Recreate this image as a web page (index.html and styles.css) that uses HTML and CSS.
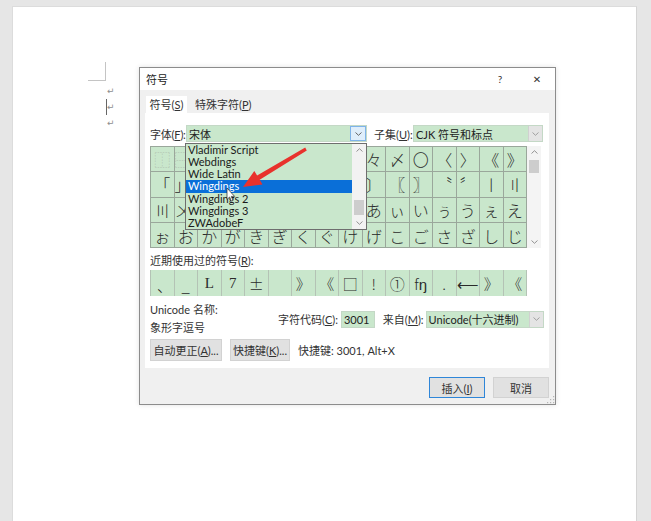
FILE: index.html
```html
<!DOCTYPE html>
<html lang="zh-CN">
<head>
<meta charset="utf-8">
<title>符号</title>
<link rel="stylesheet" href="styles.css">
</head>
<body>
<div class="page">
  <div class="corner"></div>
  <div class="paras"><span>↵</span><span class="caretline">↵</span><span>↵</span></div>

  <div class="dialog">
    <div class="titlebar">
      <span class="title">符号</span>
      <span class="help">?</span>
      <span class="close">✕</span>
    </div>
    <div class="body">
      <div class="tabs">
        <div class="tab active">符号(<u>S</u>)</div>
        <div class="tab">特殊字符(<u>P</u>)</div>
      </div>
      <div class="panel">
        <div class="fontrow">
          <span class="lbl lbl-font">字体(<u>F</u>):</span>
          <div class="combo combo-font"><span class="val">宋体</span><span class="ddbtn open"><svg width="7" height="4" viewBox="0 0 7 4"><path d="M0.5 0.5 L3.5 3.3 L6.5 0.5" fill="none" stroke="#555" stroke-width="0.9"/></svg></span></div>
          <span class="lbl lbl-sub">子集(<u>U</u>):</span>
          <div class="combo combo-sub"><span class="val">CJK 符号和标点</span><span class="ddbtn"><svg width="7" height="4" viewBox="0 0 7 4"><path d="M0.5 0.5 L3.5 3.3 L6.5 0.5" fill="none" stroke="#999" stroke-width="0.9"/></svg></span></div>
        </div>

        <div class="gridwrap">
          <div class="grid">
            <div class="c faint">⿰</div><div class="c faint edge">⿱</div><div class="c"></div><div class="c"></div><div class="c"></div><div class="c"></div><div class="c"></div><div class="c"></div><div class="c"></div><div class="c">々</div><div class="c">〆</div><div class="c">〇</div><div class="c">〈</div><div class="c">〉</div><div class="c">《</div><div class="c">》</div>
            <div class="c">「</div><div class="c edge">」</div><div class="c"></div><div class="c"></div><div class="c"></div><div class="c"></div><div class="c"></div><div class="c"></div><div class="c"></div><div class="c">〕</div><div class="c">〖</div><div class="c">〗</div><div class="c">〝</div><div class="c">〞</div><div class="c">〡</div><div class="c">〢</div>
            <div class="c">〣</div><div class="c edge">〤</div><div class="c"></div><div class="c"></div><div class="c"></div><div class="c"></div><div class="c"></div><div class="c"></div><div class="c"></div><div class="c">あ</div><div class="c">ぃ</div><div class="c">い</div><div class="c">ぅ</div><div class="c">う</div><div class="c">ぇ</div><div class="c">え</div>
            <div class="c low">ぉ</div><div class="c low">お</div><div class="c low">か</div><div class="c low">が</div><div class="c low">き</div><div class="c low">ぎ</div><div class="c low">く</div><div class="c low">ぐ</div><div class="c low">け</div><div class="c low">げ</div><div class="c low">こ</div><div class="c low">ご</div><div class="c low">さ</div><div class="c low">ざ</div><div class="c low">し</div><div class="c low">じ</div>
          </div>
          <div class="vscroll">
            <span class="arr"><svg width="7" height="4" viewBox="0 0 7 4"><path d="M0.5 3.5 L3.5 0.7 L6.5 3.5" fill="none" stroke="#888" stroke-width="0.9"/></svg></span>
            <span class="thumb"></span>
            <span class="spacer"></span>
            <span class="arr"><svg width="7" height="4" viewBox="0 0 7 4"><path d="M0.5 0.5 L3.5 3.3 L6.5 0.5" fill="none" stroke="#888" stroke-width="0.9"/></svg></span>
          </div>
        </div>

        <div class="label-recent">近期使用过的符号(<u>R</u>):</div>
        <div class="recent">
          <div class="c r-dun">、</div><div class="c r-us">_</div><div class="c r-serif">L</div><div class="c r-serif">7</div><div class="c">±</div><div class="c"></div><div class="c">》</div><div class="c">《</div><div class="c">□</div><div class="c">!</div><div class="c">①</div><div class="c">fŋ</div><div class="c">.</div><div class="c">⟵</div><div class="c">》</div><div class="c">《</div>
        </div>

        <div class="info">
          <div class="info-left">
            <span>Unicode 名称:</span>
            <span>象形字逗号</span>
          </div>
          <span class="lbl">字符代码(<u>C</u>):</span>
          <div class="code">3001</div>
          <span class="lbl lbl-from">来自(<u>M</u>):</span>
          <div class="combo combo-from"><span class="val">Unicode(十六进制)</span><span class="ddbtn"><svg width="7" height="4" viewBox="0 0 7 4"><path d="M0.5 0.5 L3.5 3.3 L6.5 0.5" fill="none" stroke="#999" stroke-width="0.9"/></svg></span></div>
        </div>

        <div class="btnrow">
          <button class="btn btn-auto">自动更正(<u>A</u>)...</button>
          <button class="btn btn-key">快捷键(<u>K</u>)...</button>
          <span class="keytext">快捷键: 3001, Alt+X</span>
        </div>
      </div>

      <div class="footer">
        <button class="btn fbtn default">插入(<u>I</u>)</button>
        <button class="btn fbtn">取消</button>
      </div>
    </div>

    <svg class="grip" width="10" height="10" viewBox="0 0 10 10">
      <rect x="8" y="2" width="1.2" height="1.2" fill="#b5b5b5"/>
      <rect x="5" y="5" width="1.2" height="1.2" fill="#b5b5b5"/><rect x="8" y="5" width="1.2" height="1.2" fill="#b5b5b5"/>
      <rect x="2" y="8" width="1.2" height="1.2" fill="#b5b5b5"/><rect x="5" y="8" width="1.2" height="1.2" fill="#b5b5b5"/><rect x="8" y="8" width="1.2" height="1.2" fill="#b5b5b5"/>
    </svg>

    <div class="dropdown">
      <div class="items">
        <div class="item">Vladimir Script</div>
        <div class="item">Webdings</div>
        <div class="item">Wide Latin</div>
        <div class="item sel">Wingdings</div>
        <div class="item">Wingdings 2</div>
        <div class="item">Wingdings 3</div>
        <div class="item">ZWAdobeF</div>
      </div>
      <div class="dscroll">
        <span class="arr"><svg width="7" height="4" viewBox="0 0 7 4"><path d="M0.5 3.5 L3.5 0.7 L6.5 3.5" fill="none" stroke="#888" stroke-width="0.9"/></svg></span>
        <span class="spacer"></span>
        <span class="thumb"></span>
        <span class="arr"><svg width="7" height="4" viewBox="0 0 7 4"><path d="M0.5 0.5 L3.5 3.3 L6.5 0.5" fill="none" stroke="#888" stroke-width="0.9"/></svg></span>
      </div>
    </div>

    <svg class="overlay" width="417" height="338" viewBox="140 68 417 338">
      <polygon points="243,187 262.5,184.5 259.7,179.8 306.8,150.4 305.2,147.6 257.1,175.6 254.3,170.9" fill="#e8322c"/>
      <polygon points="227,188 227,199.5 229.6,197 231.4,201.2 233,200.5 231.3,196.4 234.6,196.4" fill="#fff" stroke="#222" stroke-width="0.7" stroke-linejoin="round"/>
    </svg>
  </div>
</div>
</body>
</html>
```

FILE: styles.css
```css
* { box-sizing: border-box; }

html, body {
  margin: 0;
  width: 651px;
  height: 521px;
  overflow: hidden;
}

body {
  background: #e6e6e6;
  padding: 6px 0 0 12px;
  font-family: "Lato", "Noto Sans CJK SC", sans-serif;
  font-size: 11px;
  color: #262626;
}

u { text-decoration: underline; text-underline-offset: 1px; }

.page {
  position: relative;
  width: 625px;
  height: 515px;
  background: #fff;
  border-left: 1px solid #dcdcdc;
  border-top: 1px solid #dcdcdc;
  border-right: 1px solid #d4d4d4;
}

.corner {
  position: absolute;
  left: 75px;
  top: 55px;
  width: 18px;
  height: 19px;
  border-right: 1px solid #c4c4c4;
  border-bottom: 1px solid #c4c4c4;
}

.paras {
  position: absolute;
  left: 94px;
  top: 76px;
  display: flex;
  flex-direction: column;
  font-family: "DejaVu Sans", sans-serif;
  font-size: 9px;
  line-height: 16px;
  color: #8f8f8f;
}
.paras span { display: block; height: 16px; }
.caretline { border-left: 1px solid #666; margin-left: -1px; }

/* Dialog */
.dialog {
  position: absolute;
  left: 126px;
  top: 60px;
  width: 417px;
  height: 338px;
  background: #f0f0f0;
  border: 1px solid #8c8c8c;
  box-shadow: 0 0 5px rgba(0, 0, 0, 0.12);
}

.titlebar {
  height: 22px;
  background: #fff;
  display: flex;
  align-items: center;
  padding-left: 6px;
}
.title { font-size: 11px; color: #222; }
.help {
  margin-left: auto;
  width: 30px;
  text-align: center;
  font-size: 10px;
  color: #333;
}
.close {
  width: 36px;
  margin-left: 4px;
  text-align: center;
  font-family: "DejaVu Sans", sans-serif;
  font-size: 10px;
  color: #333;
}

.body {
  padding: 0 6px 0 5px;
}

.tabs {
  display: flex;
  margin-top: 6px;
  height: 17px;
  line-height: 17px;
}
.tab { padding: 0 4px; color: #333; }
.tab.active {
  margin-left: 1px;
  width: 41px;
  padding: 0;
  text-align: center;
  background: #fff;
}
.tab + .tab { padding-left: 8px; }

.panel {
  height: 255px;
  background: #fff;
  padding: 12px 5px 0 5px;
}

.fontrow {
  display: flex;
  align-items: center;
  height: 17px;
}
.lbl { color: #333; white-space: nowrap; }
.lbl-font { width: 36px; letter-spacing: -0.2px; }
.lbl-sub { margin-left: 7px; width: 39px; }

.combo {
  display: flex;
  align-items: center;
  height: 17px;
  background: #c9e7cc;
  border: 1px solid #c4d8c6;
}
.combo .val { flex: 1; padding-left: 2px; color: #222; white-space: nowrap; }
.ddbtn {
  width: 14px;
  height: 100%;
  display: flex;
  align-items: center;
  justify-content: center;
  background: #e4e4e4;
  border-left: 1px solid #d0d0d0;
}
.ddbtn.open {
  width: 16px;
  background: #dfeefb;
  border: 1px solid #7eb4ea;
}
.combo-font { width: 181px; }
.combo-sub { width: 130px; }

.gridwrap {
  display: flex;
  margin-top: 4px;
  height: 102px;
}
.grid {
  width: 377px;
  height: 102px;
  display: grid;
  grid-template-columns: repeat(16, 1fr);
  grid-template-rows: repeat(4, 1fr);
  gap: 1px;
  padding: 1px;
  background: #9aa79b;
}
.c {
  background: #c9e7cc;
  display: flex;
  align-items: center;
  justify-content: center;
  font-family: "Noto Sans CJK JP", "Noto Sans CJK SC", sans-serif;
  font-weight: 300;
  font-size: 16px;
  color: #2a2a2a;
  overflow: hidden;
}
.c.faint { color: #a9b8aa; }
.c.low { padding-top: 3px; }
.c.edge { justify-content: flex-start; }

.vscroll {
  width: 14px;
  display: flex;
  flex-direction: column;
  align-items: center;
  background: #f4f4f4;
}
.vscroll .arr, .dscroll .arr {
  height: 12px;
  display: flex;
  align-items: center;
}
.vscroll .thumb {
  width: 10px;
  height: 13px;
  background: #cdcdcd;
  margin-top: 2px;
}
.spacer { flex: 1; }

.label-recent {
  margin-top: 6px;
  line-height: 14px;
  color: #333;
}

.recent {
  margin-top: 2px;
  width: 377px;
  height: 26px;
  display: grid;
  grid-template-columns: repeat(16, 1fr);
  gap: 1px;
  padding: 0 1px;
  background: #b4c3b5;
}
.recent .c { font-size: 15px; }
.r-dun { align-items: flex-end; justify-content: flex-start; padding-left: 6px; }
.r-us { align-items: flex-end; }
.r-serif { font-family: "Liberation Serif", serif; font-size: 18px; font-weight: 400; }

.info {
  margin-top: 5px;
  height: 36px;
  display: flex;
  align-items: center;
}
.info-left {
  width: 133px;
  display: flex;
  flex-direction: column;
  align-self: stretch;
}
.info-left span { line-height: 18px; color: #333; }
.code {
  margin-left: 3px;
  width: 35px;
  height: 17px;
  line-height: 15px;
  padding-left: 2px;
  background: #c9e7cc;
  border: 1px solid #c4d8c6;
  color: #222;
}
.lbl-from { margin-left: 8px; }
.combo-from { margin-left: 2px; width: 123px; }

.btnrow {
  margin-top: 2px;
  display: flex;
  align-items: center;
  height: 22px;
}
.btn {
  font-family: inherit;
  font-size: 11px;
  color: #333;
  background: #e1e1e1;
  border: 1px solid #d2d2d2;
  padding: 0;
  height: 22px;
}
.btn-auto { width: 72px; }
.btn-key { width: 60px; margin-left: 8px; }
.keytext { margin-left: 8px; color: #333; }

.footer {
  display: flex;
  justify-content: flex-end;
  gap: 8px;
  padding-top: 9px;
}
.fbtn { width: 56px; height: 21px; }
.fbtn.default { border: 1px solid #2f86d8; }

.grip {
  position: absolute;
  right: 0;
  bottom: 0;
}

/* Open font list */
.dropdown {
  position: absolute;
  left: 45px;
  top: 75px;
  width: 182px;
  height: 87px;
  display: flex;
  background: #c9e7cc;
  border: 1px solid #6e6e6e;
}
.items { flex: 1; }
.item {
  height: 12.15px;
  line-height: 12px;
  padding-left: 2px;
  font-family: "Lato", "Liberation Sans", sans-serif;
  font-size: 11px;
  color: #1a1a1a;
  white-space: nowrap;
}
.item.sel { background: #0a6fd8; color: #fff; }
.dscroll {
  width: 14px;
  display: flex;
  flex-direction: column;
  align-items: center;
  background: #f2f2f2;
}
.dscroll .thumb {
  width: 10px;
  height: 15px;
  background: #cdcdcd;
  margin-bottom: 2px;
}

.overlay {
  position: absolute;
  left: 0;
  top: 0;
  pointer-events: none;
}
```
